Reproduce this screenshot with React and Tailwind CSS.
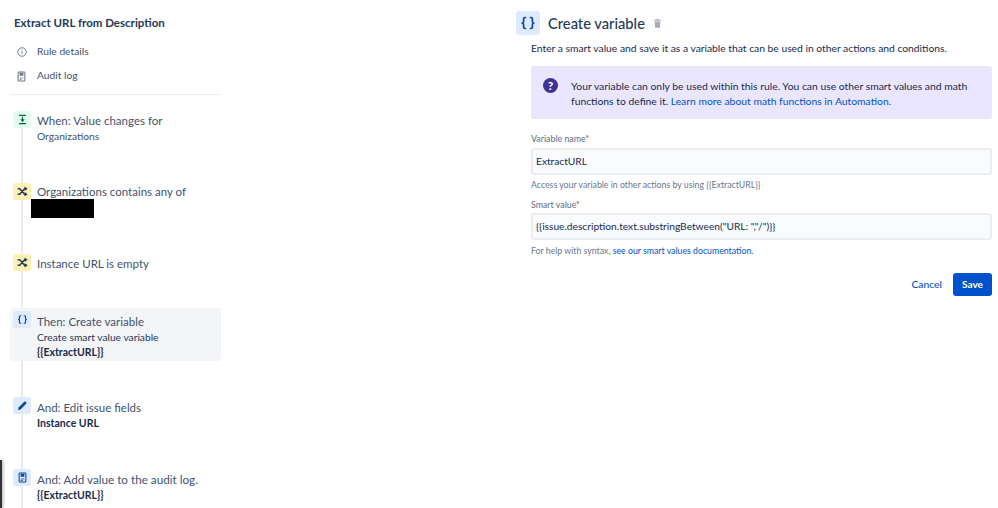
import React from "react";

const font = { fontFamily: 'Lato, "Noto Sans", sans-serif' };

function Braces({ className }) {
  return (
    <svg viewBox="0 0 16 16" className={className} fill="none" stroke="currentColor" strokeWidth="1.7" strokeLinecap="round" strokeLinejoin="round">
      <path d="M5.5 2.5H5C4 2.5 3.6 3 3.6 4v2.6C3.6 7.4 3 8 2.2 8c.8 0 1.4.6 1.4 1.4V12c0 1 .4 1.5 1.4 1.5h.5" />
      <path d="M10.5 2.5h.5c1 0 1.4.5 1.4 1.5v2.6c0 .8.6 1.4 1.4 1.4-.8 0-1.4.6-1.4 1.4V12c0 1-.4 1.5-1.4 1.5h-.5" />
    </svg>
  );
}

function Shuffle() {
  return (
    <svg viewBox="0 0 16 16" className="h-[11px] w-[11px] text-[#253858]" fill="none" stroke="currentColor" strokeWidth="2">
      <path d="M1 4h3l7 8h1M1 12h3l7-8h1" />
      <path d="M11 0.8l4.5 3.2L11 7.2zM11 8.8l4.5 3.2L11 15.2z" fill="currentColor" stroke="none" />
    </svg>
  );
}

function Trigger() {
  return (
    <svg viewBox="0 0 16 16" className="h-[11px] w-[11px] text-[#006644]" fill="none" stroke="currentColor" strokeWidth="1.7">
      <path d="M3 2h10M3 14h10" />
      <path d="M8 4v7" />
      <path d="M4.8 7.5L8 11.5l3.2-4z" fill="currentColor" stroke="none" />
    </svg>
  );
}

function Pencil() {
  return (
    <svg viewBox="0 0 16 16" className="h-[11px] w-[11px] text-[#0747a6]" fill="currentColor">
      <path d="M1.5 14.5l.8-3.6 8.2-8.2a1.6 1.6 0 0 1 2.2 0l.6.6a1.6 1.6 0 0 1 0 2.2l-8.2 8.2z" />
    </svg>
  );
}

function Log({ className }) {
  return (
    <svg viewBox="0 0 12 14" className={className} fill="none" stroke="currentColor" strokeWidth="1.4">
      <rect x="1.5" y="1" width="9" height="12" rx="1" />
      <path d="M3.5 2h5v4h-5z" fill="currentColor" stroke="none" />
      <path d="M3.5 9h5M3.5 11h3" strokeWidth="1" />
    </svg>
  );
}

function Step({ bg, icon, iconTop = "mt-[1px]", textTop = "pt-[3px]", size = "text-[11.5px]", children, sub, active, className }) {
  return (
    <div className={`flex gap-[6px] rounded-[3px] pl-[3px] pr-1 ${active ? "bg-[#f4f5f7]" : ""} ${className}`}>
      <div className={`relative flex h-[17px] w-[18px] shrink-0 items-center justify-center rounded-[3px] ${iconTop} ${bg}`}>{icon}</div>
      <div className={textTop}>
        <div className={`${size} leading-[15px] text-[#42526e]`}>{children}</div>
        {sub}
      </div>
    </div>
  );
}

export default function App() {
  return (
    <div style={font} className="relative flex h-[508px] w-[998px] overflow-hidden bg-white text-[#172b4d]">
      <div className="absolute bottom-0 left-0 h-[48px] w-[2px] bg-[#333333] shadow-[1px_0_3px_rgba(0,0,0,0.4)]" />

      <aside className="ml-[10px] w-[211px] shrink-0">
        <h1 className="ml-[4px] mt-[15px] text-[11.5px] font-bold leading-[16px] text-[#253858]">Extract URL from Description</h1>
        <div className="mt-[13px] flex h-[16px] items-center gap-[10px] pl-[7px] text-[10.25px] text-[#42526e]">
          <svg viewBox="0 0 16 16" className="h-[10px] w-[10px] text-[#6b778c]" fill="none" stroke="currentColor" strokeWidth="1.5">
            <circle cx="8" cy="8" r="6.8" />
            <path d="M8 7v4.5M8 4v1.5" />
          </svg>
          <span>Rule details</span>
        </div>
        <div className="mt-[8px] flex h-[16px] items-center gap-[11px] pl-[7px] text-[10.25px] text-[#42526e]">
          <Log className="h-[11px] w-[9px] text-[#6b778c]" />
          <span>Audit log</span>
        </div>
        <div className="mt-[10px] h-px bg-[#ebecf0]" />

        <div className="relative mt-[15px]">
          <div className="absolute bottom-[-120px] left-[11px] top-[10px] w-[2px] bg-[#ebecf0]" />
          <Step className="relative h-[72px]" bg="bg-[#e3fcef]" icon={<Trigger />}>
            When: Value changes for<br />
            <span className="block text-[10.25px] leading-[16px]">Organizations</span>
          </Step>
          <Step className="relative h-[71px]" textTop="pt-[2px]" bg="bg-[#fff0b3]" icon={<Shuffle />}
            sub={<div className="-ml-[6px] h-[19px] w-[63px] bg-black" />}>
            Organizations contains any of
          </Step>
          <Step className="relative h-[55px]" bg="bg-[#fff0b3]" icon={<Shuffle />}>
            Instance URL is empty
          </Step>
          <Step active className="relative h-[53px]" iconTop="mt-[3px]" textTop="pt-[6px]" bg="bg-[#deebff]" icon={<Braces className="h-[11px] w-[11px] text-[#0747a6]" />}
            sub={<div className="mt-[1px] text-[10.25px] leading-[15px]"><div className="text-[#253858]">Create smart value variable</div><div className="text-[10.5px] font-bold text-[#172b4d]">{"{{ExtractURL}}"}</div></div>}>
            <span>Then: Create variable</span>
          </Step>
          <div className="h-[35px]" />
          <Step className="relative h-[72px]" textTop="pt-[4px]" bg="bg-[#deebff]" icon={<Pencil />}
            sub={<div className="mt-[1px] text-[10.5px] font-bold leading-[15px] text-[#172b4d]">Instance URL</div>}>
            And: Edit issue fields
          </Step>
          <Step className="relative h-[40px]" textTop="pt-[4px]" size="text-[11.7px]" bg="bg-[#deebff]" icon={<Log className="h-[11px] w-[9px] text-[#0747a6]" />}
            sub={<div className="mt-[1px] text-[10.5px] font-bold leading-[15px] text-[#172b4d]">{"{{ExtractURL}}"}</div>}>
            And: Add value to the audit log.
          </Step>
        </div>
      </aside>

      <main className="ml-[295px] w-[476px] shrink-0">
        <div className="mt-[11px] flex items-center">
          <div className="flex h-[24px] w-[24px] items-center justify-center rounded-[3px] bg-[#deebff]">
            <Braces className="h-[16px] w-[16px] text-[#0747a6]" />
          </div>
          <h2 className="ml-[8px] text-[14.7px] font-medium leading-[24px] text-[#253858]">Create variable</h2>
          <svg viewBox="0 0 12 14" className="ml-[8px] h-[10px] w-[9px] text-[#a5adba]" fill="currentColor">
            <path d="M1 2.5h3.5L5 1h2l.5 1.5H11V4H1zM2 5h8l-.7 8.5H2.7z" />
          </svg>
        </div>
        <div className="ml-[15px]">
          <p className="mt-[6px] text-[10.3px] leading-[14px] text-[#172b4d]">Enter a smart value and save it as a variable that can be used in other actions and conditions.</p>
          <div className="mt-[11px] flex h-[53px] rounded-[3px] bg-[#eae6ff] pl-[12px] pt-[12px]">
            <div className="flex h-[15px] w-[15px] shrink-0 items-center justify-center rounded-full bg-[#403294] text-[12px] font-bold leading-none text-white">?</div>
            <p className="ml-[13px] mt-[1px] text-[10.35px] leading-[15px] text-[#172b4d]">
              Your variable can only be used within this rule. You can use other smart values and math<br />functions to define it. <span className="text-[#0052cc]">Learn more about math functions in Automation.</span>
            </p>
          </div>

          <label className="mt-[13px] block text-[8.8px] font-medium leading-[13px] text-[#6b778c]">Variable name<span className="text-[#de350b]">*</span></label>
          <div className="mt-[3px] flex h-[27px] items-center rounded-[3px] border-2 border-[#ebecf0] bg-[#fafbfc] pl-[3px] text-[10.2px] text-[#172b4d]">ExtractURL</div>
          <p className="mt-[3px] text-[8.75px] leading-[13px] text-[#6b778c]">{"Access your variable in other actions by using {{ExtractURL}}"}</p>
          <label className="mt-[7px] block text-[8.8px] font-medium leading-[13px] text-[#6b778c]">Smart value<span className="text-[#de350b]">*</span></label>
          <div className="mt-[2px] flex h-[27px] items-center rounded-[3px] border-2 border-[#ebecf0] bg-[#fafbfc] pl-[3px] text-[10.2px] text-[#172b4d]">{'{{issue.description.text.substringBetween("URL: ","/")}}'}</div>
          <p className="mt-[4px] text-[8.75px] leading-[13px] text-[#6b778c]">For help with syntax, <span className="text-[#0052cc]">see our smart values documentation.</span></p>

          <div className="mt-[16px] flex items-center justify-end gap-[11px]">
            <span className="text-[10.3px] font-medium text-[#0052cc]">Cancel</span>
            <button className="h-[23px] w-[39px] rounded-[3px] bg-[#0052cc] text-[10.1px] font-bold text-white">Save</button>
          </div>
        </div>
      </main>
    </div>
  );
}
